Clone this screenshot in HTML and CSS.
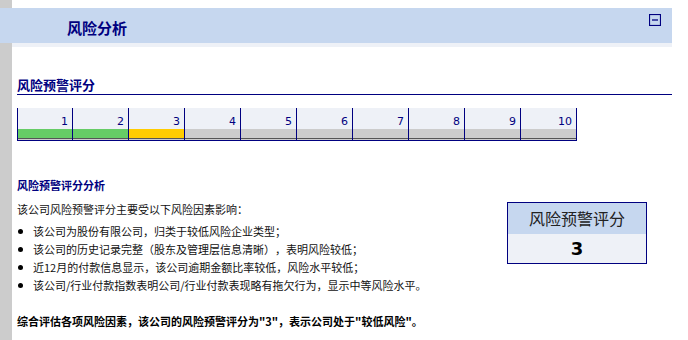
FILE: index.html
```html
<!DOCTYPE html>
<html>
<head>
<meta charset="utf-8">
<link rel="stylesheet" href="styles.css">
</head>
<body>
<div class="page">
  <div class="header">
    <span class="header-title">风险分析</span>
    <svg class="collapse" width="12" height="12" viewBox="0 0 12 12"><rect x="0.5" y="0.5" width="11" height="11" fill="none" stroke="#000080" stroke-width="1.2"/><line x1="3" y1="6" x2="9" y2="6" stroke="#000080" stroke-width="1.3"/></svg>
  </div>
  <div class="strip"></div>
  <div class="content">
    <div class="section-title">风险预警评分</div>
    <div class="scale">
      <div class="cell"><div class="num">1</div><div class="bar green"></div></div>
      <div class="cell"><div class="num">2</div><div class="bar green"></div></div>
      <div class="cell"><div class="num">3</div><div class="bar yellow"></div></div>
      <div class="cell"><div class="num">4</div><div class="bar"></div></div>
      <div class="cell"><div class="num">5</div><div class="bar"></div></div>
      <div class="cell"><div class="num">6</div><div class="bar"></div></div>
      <div class="cell"><div class="num">7</div><div class="bar"></div></div>
      <div class="cell"><div class="num">8</div><div class="bar"></div></div>
      <div class="cell"><div class="num">9</div><div class="bar"></div></div>
      <div class="cell"><div class="num">10</div><div class="bar"></div></div>
    </div>
    <div class="analysis">
      <div class="analysis-text">
        <div class="sub-title">风险预警评分分析</div>
        <p class="intro">该公司风险预警评分主要受以下风险因素影响：</p>
        <ul class="factors">
          <li>该公司为股份有限公司，归类于较低风险企业类型；</li>
          <li>该公司的历史记录完整（股东及管理层信息清晰），表明风险较低；</li>
          <li>近12月的付款信息显示，该公司逾期金额比率较低，风险水平较低；</li>
          <li>该公司/行业付款指数表明公司/行业付款表现略有拖欠行为，显示中等风险水平。</li>
        </ul>
        <p class="conclusion">综合评估各项风险因素，该公司的风险预警评分为"3"，表示公司处于"较低风险"。</p>
      </div>
      <div class="score-box">
        <div class="score-head">风险预警评分</div>
        <div class="score-val">3</div>
      </div>
    </div>
  </div>
</div>
</body>
</html>
```
FILE: styles.css
```css
html, body {
  margin: 0;
  padding: 0;
}
body {
  background: linear-gradient(to right, #cccccc 12px, #ffffff 12px);
  font-family: "Noto Sans CJK SC", "DejaVu Sans", sans-serif;
  color: #000;
  width: 688px;
  height: 340px;
  overflow: hidden;
  text-spacing-trim: space-all;
}
.page {
  padding-top: 8px;
  width: 672px;
}
.header {
  height: 35px;
  background: #c6d7ef;
  display: flex;
  align-items: center;
  justify-content: space-between;
  padding: 0 11px 0 67px;
  box-sizing: border-box;
}
.header-title {
  font-size: 15px;
  font-weight: bold;
  color: #000080;
  line-height: 16px;
  margin-top: 5px;
}
.collapse {
  display: block;
  margin-top: -12px;
}
.strip {
  margin-left: 12px;
  height: 4px;
  background: #eef1f7;
}
.content {
  margin-left: 12px;
  padding-left: 5px;
}
.section-title {
  margin-top: 30px;
  font-size: 13px;
  font-weight: bold;
  color: #000080;
  line-height: 16px;
  padding-bottom: 1px;
  border-bottom: 1px solid #000080;
}
.scale {
  margin-top: 13px;
  display: flex;
  width: 560px;
  border-left: 1px solid #000080;
  border-bottom: 1px solid #000080;
  box-sizing: border-box;
}
.cell {
  width: 56px;
  border-right: 1px solid #000080;
  box-sizing: border-box;
  display: flex;
  flex-direction: column;
}
.cell:first-child {
  width: 55px;
}
.num {
  height: 21px;
  background: #eef1f7;
  text-align: right;
  padding-right: 4px;
  font-family: "DejaVu Sans", sans-serif;
  font-size: 11px;
  line-height: 28px;
  color: #000080;
  overflow: hidden;
}
.bar {
  height: 9px;
  background: #cccccc;
  border-bottom: 1px solid #555555;
  box-shadow: 0 1px 0 #cccccc;
  margin-bottom: 1px;
}
.bar.green { background: #66cc66; }
.bar.yellow { background: #ffcc00; }
.analysis {
  display: flex;
  justify-content: space-between;
  align-items: flex-start;
  margin-top: 36px;
  padding-right: 25px;
}
.sub-title {
  font-size: 11px;
  font-weight: bold;
  color: #000080;
  line-height: 16px;
}
.intro {
  margin: 7px 0 4px;
  font-size: 11px;
  line-height: 18px;
  color: #111;
}
.factors {
  margin: 0;
  padding: 0;
  list-style: none;
}
.factors li {
  position: relative;
  padding-left: 16px;
  font-size: 11px;
  line-height: 18px;
  color: #111;
}
.factors li::before {
  content: "";
  position: absolute;
  left: 1px;
  top: 7px;
  width: 5px;
  height: 5px;
  border-radius: 50%;
  background: #000;
}
.conclusion {
  margin: 18px 0 0;
  font-size: 11px;
  font-weight: bold;
  line-height: 18px;
  color: #000;
}
.score-box {
  margin-top: 25px;
  width: 140px;
  border: 1px solid #000080;
  box-sizing: border-box;
}
.score-head {
  height: 31px;
  background: #c6d7ef;
  text-align: center;
  font-size: 16px;
  line-height: 31px;
  color: #222;
}
.score-val {
  height: 29px;
  background: #eef1f7;
  text-align: center;
  font-family: "DejaVu Sans", sans-serif;
  font-size: 18px;
  font-weight: bold;
  line-height: 29px;
  color: #000;
}
```
